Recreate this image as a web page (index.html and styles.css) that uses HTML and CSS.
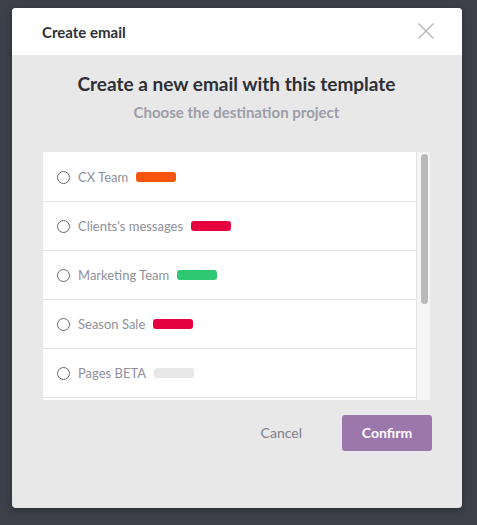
FILE: index.html
```html
<!DOCTYPE html>
<html lang="en">
<head>
    <meta charset="UTF-8">
    <meta name="viewport" content="width=device-width, initial-scale=1.0">
    <title>Create email</title>
    <link rel="stylesheet" href="styles.css">
</head>
<body>
    <div class="modal">
        <div class="modal-header">
            <h2>Create email</h2>
            <button class="close-btn" aria-label="Close">
                <svg width="16" height="16" viewBox="0 0 16 16">
                    <path d="M0.5 0.5 L15.5 15.5 M15.5 0.5 L0.5 15.5" stroke="#b3b3b3" stroke-width="1.3" fill="none"/>
                </svg>
            </button>
        </div>
        <div class="modal-body">
            <h1>Create a new email with this template</h1>
            <p class="subtitle">Choose the destination project</p>

            <div class="project-box">
                <ul class="project-list">
                    <li class="project"><span class="radio"></span><span class="name">CX Team</span><span class="tag orange"></span></li>
                    <li class="project"><span class="radio"></span><span class="name">Clients's messages</span><span class="tag red"></span></li>
                    <li class="project"><span class="radio"></span><span class="name">Marketing Team</span><span class="tag green"></span></li>
                    <li class="project"><span class="radio"></span><span class="name">Season Sale</span><span class="tag red"></span></li>
                    <li class="project"><span class="radio"></span><span class="name">Pages BETA</span><span class="tag grey"></span></li>
                    <li class="project"></li>
                </ul>
                <!-- scrollbar drawn by hand, headless chrome hides the real one -->
                <div class="scrollbar"><div class="thumb"></div></div>
            </div>

            <div class="actions">
                <button class="cancel-btn">Cancel</button>
                <button class="confirm-btn">Confirm</button>
            </div>
        </div>
    </div>
</body>
</html>
```

FILE: styles.css
```css
body {
    font-family: Lato, "Open Sans", Arial, sans-serif;
    margin: 0;
    padding: 8px 12px;
    background-color: #3d4049;
    color: #2d2f36;
}

.modal {
    width: 450px;
    height: 500px;
    background: #e8e8e8;
    border-radius: 4px;
    overflow: hidden;
    box-shadow: 0 2px 6px rgba(0,0,0,0.3);
    display: flex;
    flex-direction: column;
}

.modal-header {
    height: 47px;
    background: #ffffff;
    display: flex;
    align-items: center;
    justify-content: space-between;
    padding: 0 28px 0 30px;
    flex-shrink: 0;
}

.modal-header h2 {
    margin: 0;
    font-size: 15px;
    font-weight: bold;
    color: #2d2f36;
}

.close-btn {
    border: none;
    background: none;
    padding: 0;
    width: 16px;
    height: 16px;
    margin-top: -2px;
    cursor: pointer;
}

.close-btn svg {
    display: block;
}

.modal-body {
    flex: 1;
    padding: 17px 32px 0 31px;
    display: flex;
    flex-direction: column;
}

.modal-body h1 {
    margin: 0;
    font-size: 19px;
    line-height: 24px;
    font-weight: bold;
    text-align: center;
    color: #2d2f36;
}

.subtitle {
    margin: 7px 0 0;
    font-size: 15px;
    line-height: 18px;
    font-weight: bold;
    text-align: center;
    color: #9c9da6;
}

.project-box {
    margin-top: 31px;
    height: 248px;
    display: flex;
    background: #ffffff;
}

.project-list {
    list-style: none;
    margin: 0;
    padding: 1px 0 0;
    flex: 1;
    overflow: hidden;
}

.scrollbar {
    width: 14px;
    background: #f5f5f5;
    border-left: 1px solid #e2e2e2;
    padding: 2px 2px 0 4px;
    box-sizing: border-box;
}

.thumb {
    height: 150px;
    background: #b9b9b9;
    border-radius: 4px;
}

.project {
    height: 48px;
    border-bottom: 1px solid #e3e3e3;
    display: flex;
    align-items: center;
    padding-left: 14px;
    font-size: 13px;
    color: #8e909b;
}

.radio {
    width: 11px;
    height: 11px;
    border: 1px solid #6a6a6a;
    border-radius: 50%;
    margin-right: 8px;
    flex-shrink: 0;
}

.tag {
    width: 40px;
    height: 10px;
    border-radius: 3px;
    margin-left: 8px;
}

.tag.orange { background: #f4540c; }
.tag.red { background: #e5003f; }
.tag.green { background: #2dc871; }
.tag.grey { background: #e8e8e8; }

.actions {
    display: flex;
    justify-content: flex-end;
    align-items: center;
    gap: 20px;
    margin: 14px -2px 0 0;
}

.cancel-btn, .confirm-btn {
    font-family: inherit;
    font-size: 14px;
    border: none;
    cursor: pointer;
}

.cancel-btn {
    background: none;
    color: #7d7f88;
    padding: 10px 20px;
}

.confirm-btn {
    width: 90px;
    height: 36px;
    background: #9b77ab;
    color: #ffffff;
    font-weight: bold;
    border-radius: 3px;
}
```
